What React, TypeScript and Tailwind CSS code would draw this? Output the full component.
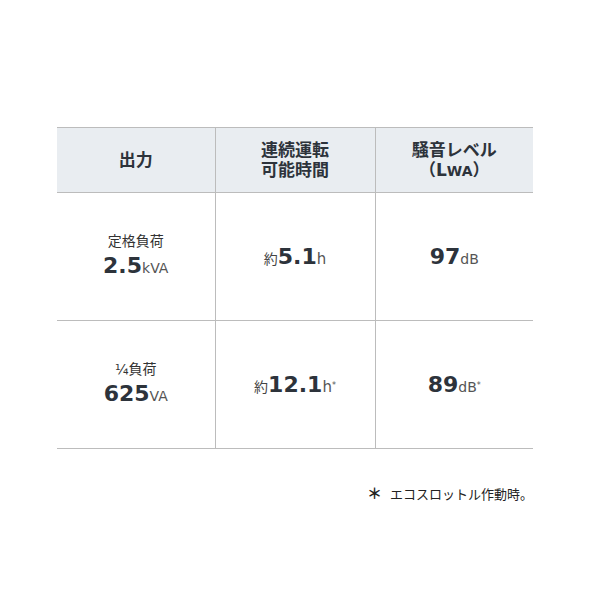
const rows = [
  { label: "定格負荷", value: "2.5", unit: "kVA", time: "5.1", timeNote: false, noise: "97", noiseNote: false },
  { label: "¼負荷", value: "625", unit: "VA", time: "12.1", timeNote: true, noise: "89", noiseNote: true },
];

const font = "font-['DejaVu_Sans','Noto_Sans_CJK_JP',sans-serif]";

export default function App() {
  return (
    <div className={`w-[600px] h-[600px] bg-white pt-[127px] pl-[57px] pr-[67px] ${font} text-[#2d333b]`}>
      <table className="w-full border-collapse table-fixed">
        <thead>
          <tr className="h-[65px] bg-[#e9edf1] border-y border-[#bcbcbc]">
            <th className="w-[158px] text-[17px] font-bold leading-[20px]">出力</th>
            <th className="w-[160px] border-x border-[#bcbcbc] text-[17px] font-bold leading-[20px]">
              連続運転
              <br />
              可能時間
            </th>
            <th className="text-[17px] font-bold leading-[20px]">
              騒音レベル
              <br />
              （L<span className="text-[14px]">WA</span>）
            </th>
          </tr>
        </thead>
        <tbody>
          {rows.map((r) => (
            <tr key={r.label} className="h-[128px] border-b border-[#bcbcbc]">
              <td className="text-center align-middle">
                <div className="text-[14px] leading-[18px] text-[#333]">{r.label}</div>
                <div className="mt-[3px] leading-[26px]">
                  <span className="text-[22px] font-bold">{r.value}</span>
                  <span className="text-[14px] text-[#555]">{r.unit}</span>
                </div>
              </td>
              <td className="border-x border-[#bcbcbc] text-center align-middle">
                <span className="text-[14px] text-[#444]">約</span>
                <span className="text-[22px] font-bold">{r.time}</span>
                <span className="text-[15px] text-[#555]">h</span>
                {r.timeNote && <sup className="text-[8px] text-[#555]">*</sup>}
              </td>
              <td className="text-center align-middle">
                <span className="text-[22px] font-bold">{r.noise}</span>
                <span className="text-[14px] text-[#555]">dB</span>
                {r.noiseNote && <sup className="text-[8px] text-[#555]">*</sup>}
              </td>
            </tr>
          ))}
        </tbody>
      </table>
      <div className="mt-[34px] flex justify-end items-center gap-[8px] text-[13px] text-[#222]">
        <span className="text-[15px] font-bold">＊</span>
        <span>エコスロットル作動時。</span>
      </div>
    </div>
  );
}
